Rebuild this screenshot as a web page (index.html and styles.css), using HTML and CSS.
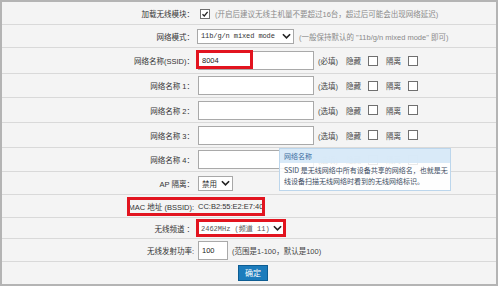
FILE: index.html
```html
<!DOCTYPE html>
<html lang="zh-CN">
<head>
  <meta charset="UTF-8">
  <title>无线设置</title>
  <link rel="stylesheet" href="styles.css">
</head>
<body>
  <div class="panel">
    <div class="row h22">
      <div class="label">加载无线模块：</div>
      <div class="value">
        <span class="check on"><svg viewBox="0 0 8 8" width="8" height="8"><path d="M1.5 4.2 L3.3 6 L6.6 1.8" fill="none" stroke="#222" stroke-width="1.3"/></svg></span>
        <span class="hint">(开启后建议无线主机量不要超过16台，超过后可能会出现网络延迟)</span>
      </div>
    </div>
    <div class="row h23">
      <div class="label">网络模式：</div>
      <div class="value">
        <span class="select mode">11b/g/n mixed mode<svg class="chev" viewBox="0 0 10 6" width="9" height="6"><path d="M1 1 L5 5 L9 1" fill="none" stroke="#222" stroke-width="1.8"/></svg></span>
        <span class="hint">(一般保持默认的 "11b/g/n mixed mode" 即可)</span>
      </div>
    </div>
    <div class="row h26">
      <div class="label">网络名称(SSID)：</div>
      <div class="value">
        <span class="field-wrap">
          <input class="text" type="text" value="8004">
          <span class="mark mark-ssid"></span>
        </span>
        <span class="note">(必填)</span>
        <span class="opt">隐藏</span><span class="check"></span>
        <span class="opt">隔离</span><span class="check"></span>
      </div>
    </div>
    <div class="row h24">
      <div class="label">网络名称 1：</div>
      <div class="value">
        <input class="text" type="text">
        <span class="note">(选填)</span>
        <span class="opt">隐藏</span><span class="check"></span>
        <span class="opt">隔离</span><span class="check"></span>
      </div>
    </div>
    <div class="row h25">
      <div class="label">网络名称 2：</div>
      <div class="value">
        <input class="text" type="text">
        <span class="note">(选填)</span>
        <span class="opt">隐藏</span><span class="check"></span>
        <span class="opt">隔离</span><span class="check"></span>
      </div>
    </div>
    <div class="row h25">
      <div class="label">网络名称 3：</div>
      <div class="value">
        <input class="text" type="text">
        <span class="note">(选填)</span>
        <span class="opt">隐藏</span><span class="check"></span>
        <span class="opt">隔离</span><span class="check"></span>
      </div>
    </div>
    <div class="row h24">
      <div class="label">网络名称 4：</div>
      <div class="value">
        <input class="text" type="text">
        <span class="note">(选填)</span>
        <span class="opt">隐藏</span><span class="check"></span>
        <span class="opt">隔离</span><span class="check"></span>
      </div>
    </div>
    <div class="row h23">
      <div class="label">AP 隔离：</div>
      <div class="value">
        <span class="select ap">禁用<svg class="chev" viewBox="0 0 10 6" width="9" height="6"><path d="M1 1 L5 5 L9 1" fill="none" stroke="#222" stroke-width="1.8"/></svg></span>
      </div>
    </div>
    <div class="row h23 mac-row">
      <div class="label">MAC 地址 (BSSID):</div>
      <div class="value">CC:B2:55:E2:E7:40</div>
      <span class="mark mark-mac"></span>
    </div>
    <div class="row h21">
      <div class="label">无线频道 ：</div>
      <div class="value">
        <span class="select chan">2462MHz (频道 11)<svg class="chev" viewBox="0 0 10 6" width="9" height="6"><path d="M1 1 L5 5 L9 1" fill="none" stroke="#222" stroke-width="1.8"/></svg></span>
      </div>
    </div>
    <div class="row h23">
      <div class="label">无线发射功率:</div>
      <div class="value">
        <input class="text short" type="text" value="100">
        <span class="note">(范围是1-100，默认是100)</span>
      </div>
    </div>
    <div class="row h21 last">
      <button class="ok">确定</button>
    </div>

    <div class="tip">
      <div class="tip-head">网络名称</div>
      <div class="tip-body">SSID 是无线网络中所有设备共享的网络名，也就是无<br>线设备扫描无线网络时看到的无线网络标识。</div>
    </div>
  </div>
</body>
</html>
```

FILE: styles.css
```css
body {
  margin: 0;
  font-family: "Liberation Sans", "Noto Sans CJK SC", sans-serif;
  font-size: 7.5px;
  color: #333;
  background: #fff;
}
.panel {
  position: relative;
  width: 498px;
  height: 286px;
  box-sizing: border-box;
  border: 2px solid #b4b4b4;
  padding-top: 1px;
  background: #f4f4f4;
}
.row {
  position: relative;
  display: grid;
  grid-template-columns: 192px 1fr;
  column-gap: 4px;
  align-items: center;
  box-sizing: border-box;
  border-bottom: 1px solid #d9d9d9;
}
.h21 { height: 21px; }
.h22 { height: 22px; }
.h23 { height: 23px; }
.h24 { height: 24px; }
.h25 { height: 25px; }
.h26 { height: 26px; }
.row.last {
  display: flex;
  justify-content: center;
  border-bottom: none;
}
.label {
  text-align: right;
  white-space: nowrap;
}
.value {
  display: flex;
  align-items: center;
  white-space: nowrap;
}
.hint {
  color: #8a8a8a;
  margin-left: 5px;
}
.check {
  display: inline-block;
  width: 8px;
  height: 8px;
  border: 1px solid #6f6f6f;
  background: #fff;
  margin-left: 7px;
}
.check.on {
  margin-left: 2px;
}
.check svg { display: block; }
.select {
  display: inline-flex;
  align-items: center;
  height: 15px;
  box-sizing: border-box;
  border: 1px solid #a8a8a8;
  background: #fff;
  padding: 0 2px 0 3px;
  color: #333;
}
.select .chev {
  margin-left: auto;
  flex: none;
}
.mode {
  font-family: "Liberation Mono", "Noto Sans CJK SC", monospace;
  font-size: 7px;
  letter-spacing: -0.1px;
  width: 97px;
  margin-left: -1px;
}
.ap {
  width: 35px;
}
.chan {
  font-family: "Liberation Mono", "Noto Sans CJK SC", monospace;
  font-size: 7px;
  width: 90px;
  height: 18px;
  margin-left: -2px;
  padding: 0 1px 0 2px;
  border: 3px solid #e2141f;
  color: #555;
}
.field-wrap {
  position: relative;
  display: inline-block;
}
.text {
  width: 116px;
  height: 19px;
  box-sizing: border-box;
  border: 1px solid #a9a9a9;
  background: #fff;
  font-family: "Liberation Sans", sans-serif;
  font-size: 7.5px;
  padding: 0 3px;
  margin: 0;
  color: #222;
}
.text.short {
  width: 30px;
}
.note {
  margin-left: 4px;
  color: #444;
}
.opt {
  margin-left: 8px;
  color: #444;
}
.mark {
  position: absolute;
  border: 3px solid #e2141f;
  box-sizing: border-box;
  pointer-events: none;
}
.mark-ssid {
  left: -2px;
  top: -1px;
  width: 57px;
  height: 19px;
}
.mark-mac {
  left: 125px;
  top: 2px;
  width: 138px;
  height: 19px;
}
.ok {
  font-family: "Noto Sans CJK SC", sans-serif;
  font-size: 8px;
  color: #fff;
  background: #1c7cbc;
  border: 1px solid #0d5d93;
  width: 30px;
  height: 16px;
  padding: 0;
  margin-left: 8px;
}
.tip {
  position: absolute;
  left: 277px;
  top: 146px;
  width: 170px;
  border: 1px solid #bcd6ec;
  background: rgba(255, 255, 255, 0.85);
  font-family: "Noto Sans CJK SC", sans-serif;
  white-space: nowrap;
}
.tip-head {
  background: rgba(214, 232, 247, 0.92);
  color: #3a6aa0;
  font-size: 7px;
  height: 14px;
  line-height: 14px;
  padding-left: 4px;
}
.tip-body {
  font-size: 7px;
  line-height: 11px;
  color: #3d4d63;
  padding: 2px 4px 3px;
}
```
